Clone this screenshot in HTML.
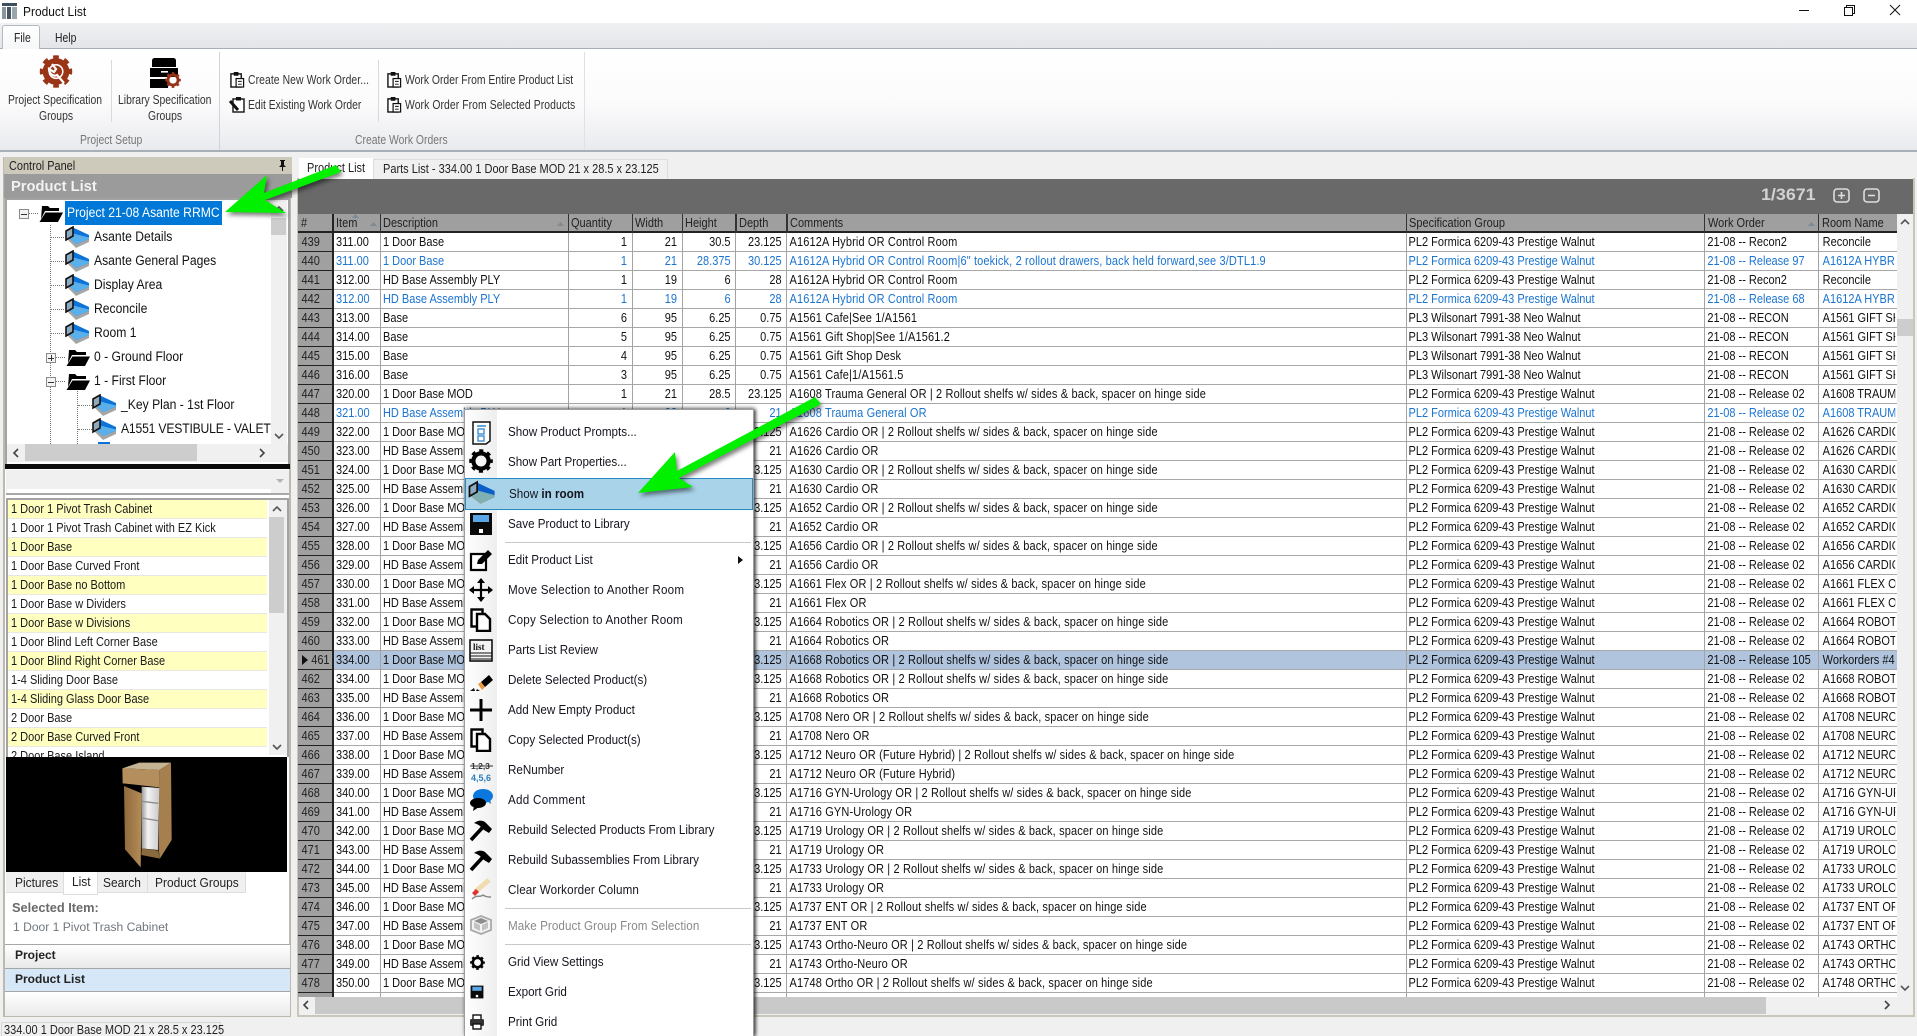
<!DOCTYPE html>
<html><head><meta charset="utf-8"><title>Product List</title>
<style>
html,body{margin:0;padding:0;overflow:hidden;width:1917px;height:1036px}
body{position:relative;background:#f0f0f0;font-family:"Liberation Sans",sans-serif;color:#111}
#w{position:absolute;left:0;top:0;width:1917px;height:1036px;overflow:hidden}
.a{position:absolute}
.t{position:absolute;white-space:nowrap;line-height:16px;transform-origin:0 50%}
.rb{font-size:12.5px;transform:scaleX(.83);color:#333}
.rg{font-size:12.5px;transform:scaleX(.83);color:#777}
.tr{font-size:13.5px;transform:scaleX(.9);color:#111}
.li{font-size:12.5px;transform:scaleX(.88);color:#1a1a1a}
.mn{font-size:12.8px;transform:scaleX(.91);color:#151520}
.tb{font-size:13px;transform:scaleX(.92);color:#222}
svg.a{overflow:visible}
.dv{position:absolute;width:0;border-left:1px dotted #777}
.dh{position:absolute;height:0;border-top:1px dotted #777}
.ex{position:absolute;width:8px;height:8px;border:1px solid #8a8a8a;background:#f4f4f4}
.ex:before{content:"";position:absolute;left:1px;right:1px;top:3.5px;height:1px;background:#333}
.ex.p:after{content:"";position:absolute;top:1px;bottom:1px;left:3.5px;width:1px;background:#333}
.vl{position:absolute;width:1px;top:233px;height:764px;background:#a3a3a3}
.vh{position:absolute;width:1.5px;top:214px;height:19px;background:#333}
table{position:absolute;left:298px;top:233px;width:1815.4px;table-layout:fixed;border-collapse:collapse;transform:scaleX(.88);transform-origin:0 0;font-size:12.5px;color:#111}
td{height:19px;padding:0 0 0 4px;line-height:18px;white-space:nowrap;overflow:hidden;vertical-align:top}
td.r{text-align:right;padding:0 5px 0 0}
td:nth-child(8){letter-spacing:.16px}
tr.b td{color:#1b74d0}
td:first-child{color:#222 !important}
.ms{position:absolute;left:469px;width:24px;height:24px}
</style></head>
<body><div id="w">
<svg width="0" height="0" style="position:absolute">
<defs>
<symbol id="gear" viewBox="0 0 24 24"><circle cx="12" cy="12" r="7.6" fill="none" stroke="currentColor" stroke-width="4.2"/><circle cx="12" cy="12" r="10" fill="none" stroke="currentColor" stroke-width="3.6" stroke-dasharray="3.9 3.95" stroke-dashoffset="2"/></symbol>
<symbol id="room" viewBox="0 0 24 22"><polygon points="0,11 11,22 24,16 24,9 11,15" fill="#a6a6a6"/><polygon points="7,1 24,9 24,13 11,18 4,12" fill="#0b74d6"/><polygon points="6,7 24,11.5 24,13 11,18 4,12" fill="#5ab0ea"/><polygon points="1,5 8,1 8,10 1,14" fill="#8fa9bd" stroke="#111" stroke-width="1.6"/></symbol>
<symbol id="folder" viewBox="0 0 24 17"><path d="M3 1h6l2 2h9v3H6L2 14z" fill="#000"/><path d="M6.5 7.5H24L19 17H0.5z" fill="#000"/></symbol>
<symbol id="clip" viewBox="0 0 16 18"><rect x="1" y="3" width="11" height="14" fill="#fff" stroke="#111" stroke-width="1.5"/><rect x="4" y="1" width="5" height="4" fill="#111"/><rect x="6.5" y="8" width="8" height="9" fill="#fff" stroke="#111" stroke-width="1.3"/><path d="M8.5 11h4M8.5 14h4" stroke="#111"/></symbol>
<symbol id="doc2" viewBox="0 0 22 24"><rect x="1.5" y="1.5" width="11" height="17" fill="#fff" stroke="#000" stroke-width="2.4"/><path d="M7 6h8l5 5v12H7z" fill="#fff" stroke="#000" stroke-width="2.4"/></symbol>
<symbol id="floppy" viewBox="0 0 24 24"><path d="M1 1h22v22H1z" fill="#0a0a0a"/><rect x="4" y="3" width="16" height="7" fill="#5aa6e6"/><rect x="10" y="17" width="4" height="4" fill="#fff"/></symbol>
<symbol id="hammer" viewBox="0 0 24 24"><path d="M2 22L14 9" stroke="#000" stroke-width="3.6" fill="none"/><path d="M5 5c4-3 8-3 11-1l7 7-3 4-5-3-3-3C10 7 8 6 5 5z" fill="#000"/></symbol>
<linearGradient id="dg" x1="0" x2="1" y1="0" y2="0"><stop offset="0" stop-color="#8f6a3c"/><stop offset="1" stop-color="#b48c58"/></linearGradient>
<linearGradient id="ig" x1="0" x2="1" y1="0" y2="0"><stop offset="0" stop-color="#9c9c9c"/><stop offset=".35" stop-color="#f4f4f4"/><stop offset="1" stop-color="#c9c9c9"/></linearGradient>
</defs>
</svg>

<!-- title bar -->
<div class="a" style="left:0;top:0;width:1917px;height:23px;background:#fff"></div>
<svg class="a" style="left:2px;top:3px" width="15" height="16" viewBox="0 0 15 16"><rect width="15" height="3" fill="#3d4f5c"/><rect y="4" width="4" height="12" fill="#8a97a0"/><rect x="5" y="4" width="4" height="12" fill="#46555f"/><rect x="10" y="4" width="5" height="12" fill="#9aa6ae"/></svg>
<div class="t" style="left:23px;top:4px;font-size:13px;transform:scaleX(.92);color:#111">Product List</div>
<div class="a" style="left:1799px;top:10px;width:10px;height:1px;background:#111"></div>
<div class="a" style="left:1844px;top:7px;width:7px;height:7px;border:1px solid #111;background:#fff;z-index:2"></div>
<div class="a" style="left:1846px;top:5px;width:7px;height:7px;border:1px solid #111"></div>
<svg class="a" style="left:1890px;top:5px" width="10" height="10"><path d="M0 0L10 10M10 0L0 10" stroke="#111"/></svg>

<!-- tab strip -->
<div class="a" style="left:0;top:23px;width:1917px;height:25px;background:linear-gradient(#f0f1f3,#e3e5e9)"></div>
<div class="a" style="left:0;top:48px;width:1917px;height:1px;background:#a7aeb6"></div>
<div class="a" style="left:2px;top:25px;width:38px;height:24px;background:linear-gradient(#fff,#f6f7f8);border:1px solid #b4bac0;border-bottom:none;border-radius:3px 3px 0 0;box-sizing:border-box"></div>
<div class="t rb" style="left:14px;top:30px;color:#222">File</div>
<div class="t rb" style="left:55px;top:30px;color:#222">Help</div>

<!-- ribbon -->
<div class="a" style="left:0;top:49px;width:1917px;height:101px;background:linear-gradient(#fff 0,#fbfbfc 55%,#e9eaee 100%)"></div>
<div class="a" style="left:0;top:150px;width:1917px;height:2px;background:#a9afb7"></div>
<div class="a" style="left:111px;top:60px;width:1px;height:62px;background:#dadada"></div>
<div class="a" style="left:219px;top:52px;width:1px;height:98px;background:#d0d3d8"></div>
<div class="a" style="left:378px;top:60px;width:1px;height:62px;background:#dadada"></div>
<div class="a" style="left:584px;top:52px;width:1px;height:98px;background:#dfe1e5"></div>
<svg class="a" style="left:39px;top:55px;color:#9a3417" width="34" height="33"><use href="#gear" width="34" height="33"/><circle cx="17" cy="16.5" r="6" fill="#9a3417"/><path d="M13 9l4 5-2 3-5-3c0 5 5 8 8 6l7 8" stroke="#fff" stroke-width="2.2" fill="none"/></svg>
<svg class="a" style="left:150px;top:57px" width="31" height="31" viewBox="0 0 31 31"><path d="M2 10V4c0-2 1-3 3-3h18c2 0 3 1 3 3v6z" fill="#000"/><rect x="0" y="11" width="28" height="9" fill="#000"/><rect x="0" y="22" width="18" height="9" fill="#000"/><rect x="11" y="14" width="7" height="1.6" fill="#fff"/><g style="color:#963318"><use href="#gear" x="15" y="15" width="16" height="16"/></g></svg>
<div class="t rb" style="left:8px;top:92px">Project Specification</div>
<div class="t rb" style="left:39px;top:108px">Groups</div>
<div class="t rb" style="left:118px;top:92px">Library Specification</div>
<div class="t rb" style="left:148px;top:108px">Groups</div>
<div class="t rg" style="left:80px;top:132px">Project Setup</div>
<div class="t rg" style="left:355px;top:132px">Create Work Orders</div>
<svg class="a" style="left:230px;top:71px" width="15" height="17"><use href="#clip" width="15" height="17"/></svg>
<svg class="a" style="left:230px;top:96px" width="15" height="17" viewBox="0 0 15 17"><rect x="3" y="3" width="11" height="13" fill="#fff" stroke="#111" stroke-width="1.4"/><rect x="6" y="1" width="5" height="3.5" fill="#111"/><path d="M0 5l8 9" stroke="#111" stroke-width="3"/></svg>
<svg class="a" style="left:387px;top:71px" width="15" height="17"><use href="#clip" width="15" height="17"/></svg>
<svg class="a" style="left:387px;top:96px" width="15" height="17"><use href="#clip" width="15" height="17"/></svg>
<div class="t rb" style="left:248px;top:72px;letter-spacing:.1px">Create New Work Order...</div>
<div class="t rb" style="left:248px;top:97px">Edit Existing Work Order</div>
<div class="t rb" style="left:405px;top:72px">Work Order From Entire Product List</div>
<div class="t rb" style="left:405px;top:97px;letter-spacing:.1px">Work Order From Selected Products</div>

<!-- left panel -->
<div class="a" style="left:3px;top:157px;width:288px;height:860px;border:1px solid #bdbaad;border-width:0 2px 2px 2px;box-sizing:border-box;background:#fff"></div>
<div class="a" style="left:4px;top:157px;width:288px;height:17px;background:#cdc9bb"></div>
<div class="t" style="left:9px;top:158px;font-size:13px;transform:scaleX(.84);color:#222">Control Panel</div>
<svg class="a" style="left:278px;top:160px" width="9" height="11"><path d="M2 0h5v1H6v4l2 2H1l2-2V1H2zM4 7h1v4H4z" fill="#111"/></svg>
<div class="a" style="left:4px;top:174px;width:288px;height:24px;background:#9b9b9b"></div>
<div class="t" style="left:11px;top:179px;font-size:15px;font-weight:bold;transform:scaleX(.98);color:#f2f2f2">Product List</div>
<div class="a" style="left:5px;top:198px;width:285px;height:266px;background:#fff;border:2px solid #a3a3a3;box-sizing:border-box;border-bottom:none"></div>
<div class="a" style="left:7px;top:444px;width:281px;height:18px;background:#f0f0f0"></div>
<div class="a" style="left:271px;top:200px;width:16px;height:244px;background:#f0f0f0"></div>
<div class="a" style="left:271px;top:218px;width:15px;height:17px;background:#cdcdcd"></div>

<div class="dv" style="left:50px;top:225px;height:219px"></div>
<div class="dv" style="left:77px;top:391px;height:53px"></div>
<div class="dh" style="left:28px;top:213px;width:10px"></div>
<div class="dh" style="left:51px;top:237px;width:13px"></div>
<div class="dh" style="left:51px;top:261px;width:13px"></div>
<div class="dh" style="left:51px;top:285px;width:13px"></div>
<div class="dh" style="left:51px;top:309px;width:13px"></div>
<div class="dh" style="left:51px;top:333px;width:13px"></div>
<div class="dh" style="left:55px;top:357px;width:10px"></div>
<div class="dh" style="left:55px;top:381px;width:10px"></div>
<div class="dh" style="left:78px;top:405px;width:14px"></div>
<div class="dh" style="left:78px;top:429px;width:14px"></div>
<div class="ex" style="left:19px;top:209px"></div>
<div class="ex p" style="left:46px;top:353px"></div>
<div class="ex" style="left:46px;top:377px"></div>

<svg class="a" style="left:39px;top:205px" width="24" height="17"><use href="#folder" width="24" height="17"/></svg>
<div class="a" style="left:65px;top:201px;width:157px;height:24px;background:#0078d7"></div>
<div class="t tr" style="left:67px;top:205px;color:#fff">Project 21-08 Asante RRMC</div>
<svg class="a" style="left:65px;top:226px" width="24" height="22"><use href="#room" width="24" height="22"/></svg>
<div class="t tr" style="left:94px;top:229px">Asante Details</div>
<svg class="a" style="left:65px;top:250px" width="24" height="22"><use href="#room" width="24" height="22"/></svg>
<div class="t tr" style="left:94px;top:253px">Asante General Pages</div>
<svg class="a" style="left:65px;top:274px" width="24" height="22"><use href="#room" width="24" height="22"/></svg>
<div class="t tr" style="left:94px;top:277px">Display Area</div>
<svg class="a" style="left:65px;top:298px" width="24" height="22"><use href="#room" width="24" height="22"/></svg>
<div class="t tr" style="left:94px;top:301px">Reconcile</div>
<svg class="a" style="left:65px;top:322px" width="24" height="22"><use href="#room" width="24" height="22"/></svg>
<div class="t tr" style="left:94px;top:325px">Room 1</div>
<svg class="a" style="left:66px;top:349px" width="24" height="17"><use href="#folder" width="24" height="17"/></svg>
<div class="t tr" style="left:94px;top:349px">0 - Ground Floor</div>
<svg class="a" style="left:66px;top:373px" width="24" height="17"><use href="#folder" width="24" height="17"/></svg>
<div class="t tr" style="left:94px;top:373px">1 - First Floor</div>
<svg class="a" style="left:92px;top:394px" width="24" height="22"><use href="#room" width="24" height="22"/></svg>
<div class="t tr" style="left:121px;top:397px">_Key Plan - 1st Floor</div>
<svg class="a" style="left:92px;top:418px" width="24" height="22"><use href="#room" width="24" height="22"/></svg>
<div class="t tr" style="left:121px;top:421px;letter-spacing:-.2px">A1551 VESTIBULE - VALET</div>
<svg class="a" style="left:92px;top:442px" width="24" height="2" viewBox="0 0 24 2"><rect x="6" width="12" height="2" fill="#0b74d6"/></svg>

<svg class="a" style="left:274px;top:206px" width="10" height="6"><path d="M1 5l4-4 4 4" fill="none" stroke="#555" stroke-width="1.6"/></svg>
<svg class="a" style="left:274px;top:433px" width="10" height="6"><path d="M1 1l4 4 4-4" fill="none" stroke="#555" stroke-width="1.6"/></svg>
<div class="a" style="left:25px;top:444px;width:172px;height:17px;background:#cdcdcd"></div>
<svg class="a" style="left:13px;top:448px" width="6" height="10"><path d="M5 1L1 5l4 4" fill="none" stroke="#444" stroke-width="1.6"/></svg>
<svg class="a" style="left:259px;top:448px" width="6" height="10"><path d="M1 1l4 4-4 4" fill="none" stroke="#444" stroke-width="1.6"/></svg>
<div class="a" style="left:5px;top:464px;width:285px;height:5px;background:#0c0c0c"></div>
<div class="a" style="left:6px;top:470px;width:283px;height:23px;background:#f0f0f0;border-bottom:2px solid #a8a8a8"></div>
<div class="a" style="left:7px;top:489px;width:264px;height:4px;background:#fff"></div>
<svg class="a" style="left:276px;top:479px" width="8" height="4"><path d="M0 0h8L4 4z" fill="#b4b4b4"/></svg>

<!-- item list -->
<div class="a" style="left:6px;top:498px;width:283px;height:259px;background:#fff;border:2px solid #a3a3a3;box-sizing:border-box;border-bottom:none"></div>
<div class="a" style="left:8px;top:500px;width:259px;height:255px;background:repeating-linear-gradient(#ffffc0 0,#ffffc0 18px,#e9e9e0 18px,#e9e9e0 19px,#fff 19px,#fff 37px,#e6e6e6 37px,#e6e6e6 38px)"></div>
<div class="t li" style="left:11px;top:501px">1 Door 1 Pivot Trash Cabinet</div>
<div class="t li" style="left:11px;top:520px">1 Door 1 Pivot Trash Cabinet with EZ Kick</div>
<div class="t li" style="left:11px;top:539px">1 Door Base</div>
<div class="t li" style="left:11px;top:558px">1 Door Base Curved Front</div>
<div class="t li" style="left:11px;top:577px">1 Door Base no Bottom</div>
<div class="t li" style="left:11px;top:596px">1 Door Base w Dividers</div>
<div class="t li" style="left:11px;top:615px">1 Door Base w Divisions</div>
<div class="t li" style="left:11px;top:634px">1 Door Blind Left Corner Base</div>
<div class="t li" style="left:11px;top:653px">1 Door Blind Right Corner Base</div>
<div class="t li" style="left:11px;top:672px">1-4 Sliding Door Base</div>
<div class="t li" style="left:11px;top:691px">1-4 Sliding Glass Door Base</div>
<div class="t li" style="left:11px;top:710px">2 Door Base</div>
<div class="t li" style="left:11px;top:729px">2 Door Base Curved Front</div>
<div class="t li" style="left:11px;top:748px">2 Door Base Island</div>
<div class="a" style="left:269px;top:500px;width:18px;height:255px;background:#f0f0f0"></div>
<div class="a" style="left:269px;top:517px;width:15px;height:96px;background:#cdcdcd"></div>
<svg class="a" style="left:272px;top:506px" width="10" height="6"><path d="M1 5l4-4 4 4" fill="none" stroke="#555" stroke-width="1.6"/></svg>
<svg class="a" style="left:272px;top:744px" width="10" height="6"><path d="M1 1l4 4 4-4" fill="none" stroke="#555" stroke-width="1.6"/></svg>

<!-- image -->
<div class="a" style="left:6px;top:757px;width:281px;height:115px;background:#000"></div>
<svg class="a" style="left:0;top:760px" width="180" height="115" viewBox="0 0 540 345">
<polygon points="367,25 418,8 513,8 478,30" fill="#c4b493"/>
<polygon points="478,30 513,8 515,240 480,295 476,270" fill="#a67f4f"/>
<polygon points="367,25 478,30 478,82 368,70" fill="#b48e5c"/>
<polygon points="425,80 478,84 474,270 425,265" fill="url(#ig)"/>
<path d="M425 124l50 6M425 174l49 8" stroke="#8e8e8e" stroke-width="4"/>
<polygon points="425,265 475,272 480,296 424,285" fill="#8a6a3f"/>
<polygon points="372,78 425,100 422,322 375,268" fill="url(#dg)"/>
</svg>
<!-- bottom tabs -->
<div class="a" style="left:6px;top:872px;width:240px;height:20px;background:#f0f0f0;border-bottom:1px solid #ddd"></div>
<div class="a" style="left:63px;top:872px;width:35px;height:23px;background:#fff;border:1px solid #ddd;border-top:none;box-sizing:border-box"></div>
<div class="a" style="left:147px;top:873px;width:1px;height:19px;background:#ddd"></div>
<div class="a" style="left:245px;top:873px;width:1px;height:19px;background:#ddd"></div>
<div class="t tb" style="left:15px;top:875px">Pictures</div>
<div class="t tb" style="left:72px;top:874px">List</div>
<div class="t tb" style="left:103px;top:875px">Search</div>
<div class="t tb" style="left:155px;top:875px">Product Groups</div>
<div class="t" style="left:12px;top:900px;font-size:12.8px;font-weight:bold;color:#6a6a6a">Selected Item:</div>
<div class="t" style="left:13px;top:919px;font-size:12.1px;color:#70767c">1 Door 1 Pivot Trash Cabinet</div>
<div class="a" style="left:5px;top:944px;width:285px;height:24px;background:linear-gradient(#fff,#e9e9e9);border-top:1px solid #a6a6a6;box-sizing:border-box"></div>
<div class="a" style="left:5px;top:968px;width:285px;height:24px;background:#d6e8f7;border-top:1px solid #a6a6a6;border-bottom:1px solid #a6a6a6;box-sizing:border-box"></div>
<div class="a" style="left:5px;top:992px;width:285px;height:24px;background:linear-gradient(#fff,#eaeaea)"></div>
<div class="t" style="left:15px;top:947px;font-size:12px;font-weight:bold;color:#222">Project</div>
<div class="t" style="left:15px;top:971px;font-size:12px;font-weight:bold;color:#222">Product List</div>

<!-- status -->
<div class="a" style="left:1px;top:1022px;width:220px;height:14px;border:1px solid #d5d5d5;border-bottom:none;box-sizing:border-box"></div>
<div class="t li" style="left:4px;top:1022px;transform:scaleX(.88);color:#222">334.00 1 Door Base MOD 21 x 28.5 x 23.125</div>

<!-- right panel -->
<div class="a" style="left:297px;top:178px;width:1618px;height:839px;border:2px solid #c9c6b8;border-top:none;box-sizing:border-box;background:#f0f0f0"></div>
<div class="a" style="left:299px;top:158px;width:74px;height:21px;background:#fff"></div>
<div class="a" style="left:373px;top:159px;width:295px;height:20px;background:#f0f0f0;border:1px solid #ddd;border-bottom:none;box-sizing:border-box"></div>
<div class="t li" style="left:307px;top:160px;color:#222">Product List</div>
<div class="t li" style="left:383px;top:161px;color:#222">Parts List - 334.00 1 Door Base MOD 21 x 28.5 x 23.125</div>
<div class="a" style="left:298px;top:179px;width:1615px;height:35px;background:#696969"></div>
<div class="t" style="left:1761px;top:187px;font-size:17px;font-weight:bold;transform:scaleX(1.05);color:#d2d2d2">1/3671</div>
<svg class="a" style="left:1833px;top:188px" width="17" height="15"><rect x="1" y="1" width="15" height="13" rx="3" fill="none" stroke="#ddd" stroke-width="1.6"/><path d="M8.5 4v7M5 7.5h7" stroke="#ddd" stroke-width="1.6"/></svg>
<svg class="a" style="left:1863px;top:188px" width="17" height="15"><rect x="1" y="1" width="15" height="13" rx="3" fill="none" stroke="#ddd" stroke-width="1.6"/><path d="M5 7.5h7" stroke="#ddd" stroke-width="1.6"/></svg>

<!-- grid -->
<div class="a" style="left:298px;top:214px;width:1599px;height:19px;background:#9f9f9f;border-bottom:2px solid #222;box-sizing:border-box"></div>
<div class="a" style="left:298px;top:233px;width:1599px;height:764px;background:#fff"></div>
<div class="a" style="left:298px;top:233px;width:34px;height:764px;background:#a0a0a0"></div>
<div class="a" style="left:332px;top:651px;width:1565px;height:18px;background:#b0c4de"></div>
<div class="a" style="left:332px;top:233px;width:1565px;height:764px;background:repeating-linear-gradient(transparent 0,transparent 18px,#a8a8a8 18px,#a8a8a8 19px)"></div>
<div class="a" style="left:298px;top:233px;width:34px;height:764px;background:repeating-linear-gradient(transparent 0,transparent 18px,#222 18px,#222 19px)"></div>
<div class="a" style="left:332px;top:214px;width:1.5px;height:783px;background:#222"></div>
<div class="vl" style="left:380px"></div><div class="vl" style="left:568px"></div><div class="vl" style="left:632px"></div><div class="vl" style="left:682px"></div><div class="vl" style="left:735px"></div><div class="vl" style="left:786px"></div><div class="vl" style="left:1406px"></div><div class="vl" style="left:1704px"></div><div class="vl" style="left:1818px"></div>
<div class="vh" style="left:379.5px"></div><div class="vh" style="left:567.5px"></div><div class="vh" style="left:631.5px"></div><div class="vh" style="left:681.5px"></div><div class="vh" style="left:735px"></div><div class="vh" style="left:786px"></div><div class="vh" style="left:1405.5px"></div><div class="vh" style="left:1703.5px"></div><div class="vh" style="left:1817.5px"></div>

<div class="t li" style="left:301px;top:215px;color:#222">#</div>
<div class="t li" style="left:336px;top:215px;color:#222">Item</div>
<div class="t li" style="left:383px;top:215px;color:#222">Description</div>
<div class="t li" style="left:571px;top:215px;color:#222">Quantity</div>
<div class="t li" style="left:635px;top:215px;color:#222">Width</div>
<div class="t li" style="left:685px;top:215px;color:#222">Height</div>
<div class="t li" style="left:739px;top:215px;color:#222">Depth</div>
<div class="t li" style="left:790px;top:215px;color:#222">Comments</div>
<div class="t li" style="left:1409px;top:215px;color:#222">Specification Group</div>
<div class="t li" style="left:1708px;top:215px;color:#222">Work Order</div>
<div class="t li" style="left:1822px;top:215px;color:#222">Room Name</div>
<svg class="a" style="left:352px;top:214px" width="8" height="5"><path d="M0 4h7L3.5 0z" fill="#7d8a94"/></svg>
<svg class="a" style="left:370px;top:222px" width="8" height="5"><path d="M0 4h7L3.5 0z" fill="#7d8a94"/></svg>
<svg class="a" style="left:557px;top:222px" width="8" height="5"><path d="M0 4h7L3.5 0z" fill="#7d8a94"/></svg>
<svg class="a" style="left:1808px;top:222px" width="8" height="5"><path d="M0 4h7L3.5 0z" fill="#7d8a94"/></svg>

<table><colgroup><col style="width:39.2px"><col style="width:53.4px"><col style="width:213.6px"><col style="width:72.7px"><col style="width:56.8px"><col style="width:60.9px"><col style="width:58px"><col style="width:703.4px"><col style="width:339.6px"><col style="width:131px"><col style="width:86.8px"></colgroup>
<tr><td>439</td><td>311.00</td><td>1 Door Base</td><td class="r">1</td><td class="r">21</td><td class="r">30.5</td><td class="r">23.125</td><td>A1612A Hybrid OR Control Room</td><td>PL2 Formica 6209-43 Prestige Walnut</td><td>21-08 -- Recon2</td><td>Reconcile</td></tr>
<tr class="b"><td>440</td><td>311.00</td><td>1 Door Base</td><td class="r">1</td><td class="r">21</td><td class="r">28.375</td><td class="r">30.125</td><td>A1612A Hybrid OR Control Room|6" toekick, 2 rollout drawers, back held forward,see 3/DTL1.9</td><td>PL2 Formica 6209-43 Prestige Walnut</td><td>21-08 -- Release 97</td><td>A1612A HYBRID</td></tr>
<tr><td>441</td><td>312.00</td><td>HD Base Assembly PLY</td><td class="r">1</td><td class="r">19</td><td class="r">6</td><td class="r">28</td><td>A1612A Hybrid OR Control Room</td><td>PL2 Formica 6209-43 Prestige Walnut</td><td>21-08 -- Recon2</td><td>Reconcile</td></tr>
<tr class="b"><td>442</td><td>312.00</td><td>HD Base Assembly PLY</td><td class="r">1</td><td class="r">19</td><td class="r">6</td><td class="r">28</td><td>A1612A Hybrid OR Control Room</td><td>PL2 Formica 6209-43 Prestige Walnut</td><td>21-08 -- Release 68</td><td>A1612A HYBRID</td></tr>
<tr><td>443</td><td>313.00</td><td>Base</td><td class="r">6</td><td class="r">95</td><td class="r">6.25</td><td class="r">0.75</td><td>A1561 Cafe|See 1/A1561</td><td>PL3 Wilsonart 7991-38 Neo Walnut</td><td>21-08 -- RECON</td><td>A1561 GIFT SHOP</td></tr>
<tr><td>444</td><td>314.00</td><td>Base</td><td class="r">5</td><td class="r">95</td><td class="r">6.25</td><td class="r">0.75</td><td>A1561 Gift Shop|See 1/A1561.2</td><td>PL3 Wilsonart 7991-38 Neo Walnut</td><td>21-08 -- RECON</td><td>A1561 GIFT SHOP</td></tr>
<tr><td>445</td><td>315.00</td><td>Base</td><td class="r">4</td><td class="r">95</td><td class="r">6.25</td><td class="r">0.75</td><td>A1561 Gift Shop Desk</td><td>PL3 Wilsonart 7991-38 Neo Walnut</td><td>21-08 -- RECON</td><td>A1561 GIFT SHOP</td></tr>
<tr><td>446</td><td>316.00</td><td>Base</td><td class="r">3</td><td class="r">95</td><td class="r">6.25</td><td class="r">0.75</td><td>A1561 Cafe|1/A1561.5</td><td>PL3 Wilsonart 7991-38 Neo Walnut</td><td>21-08 -- RECON</td><td>A1561 GIFT SHOP</td></tr>
<tr><td>447</td><td>320.00</td><td>1 Door Base MOD</td><td class="r">1</td><td class="r">21</td><td class="r">28.5</td><td class="r">23.125</td><td>A1608 Trauma General OR | 2 Rollout shelfs w/ sides &amp; back, spacer on hinge side</td><td>PL2 Formica 6209-43 Prestige Walnut</td><td>21-08 -- Release 02</td><td>A1608 TRAUMA</td></tr>
<tr class="b"><td>448</td><td>321.00</td><td>HD Base Assembly PLY</td><td class="r">1</td><td class="r">22</td><td class="r">6</td><td class="r">21</td><td>A1608 Trauma General OR</td><td>PL2 Formica 6209-43 Prestige Walnut</td><td>21-08 -- Release 02</td><td>A1608 TRAUMA</td></tr>
<tr><td>449</td><td>322.00</td><td>1 Door Base MOD</td><td class="r">1</td><td class="r">21</td><td class="r">28.5</td><td class="r">23.125</td><td>A1626 Cardio OR | 2 Rollout shelfs w/ sides &amp; back, spacer on hinge side</td><td>PL2 Formica 6209-43 Prestige Walnut</td><td>21-08 -- Release 02</td><td>A1626 CARDIO</td></tr>
<tr><td>450</td><td>323.00</td><td>HD Base Assembly PLY</td><td class="r">1</td><td class="r">22</td><td class="r">6</td><td class="r">21</td><td>A1626 Cardio OR</td><td>PL2 Formica 6209-43 Prestige Walnut</td><td>21-08 -- Release 02</td><td>A1626 CARDIO</td></tr>
<tr><td>451</td><td>324.00</td><td>1 Door Base MOD</td><td class="r">1</td><td class="r">21</td><td class="r">28.5</td><td class="r">23.125</td><td>A1630 Cardio OR | 2 Rollout shelfs w/ sides &amp; back, spacer on hinge side</td><td>PL2 Formica 6209-43 Prestige Walnut</td><td>21-08 -- Release 02</td><td>A1630 CARDIO</td></tr>
<tr><td>452</td><td>325.00</td><td>HD Base Assembly PLY</td><td class="r">1</td><td class="r">22</td><td class="r">6</td><td class="r">21</td><td>A1630 Cardio OR</td><td>PL2 Formica 6209-43 Prestige Walnut</td><td>21-08 -- Release 02</td><td>A1630 CARDIO</td></tr>
<tr><td>453</td><td>326.00</td><td>1 Door Base MOD</td><td class="r">1</td><td class="r">21</td><td class="r">28.5</td><td class="r">23.125</td><td>A1652 Cardio OR | 2 Rollout shelfs w/ sides &amp; back, spacer on hinge side</td><td>PL2 Formica 6209-43 Prestige Walnut</td><td>21-08 -- Release 02</td><td>A1652 CARDIO</td></tr>
<tr><td>454</td><td>327.00</td><td>HD Base Assembly PLY</td><td class="r">1</td><td class="r">22</td><td class="r">6</td><td class="r">21</td><td>A1652 Cardio OR</td><td>PL2 Formica 6209-43 Prestige Walnut</td><td>21-08 -- Release 02</td><td>A1652 CARDIO</td></tr>
<tr><td>455</td><td>328.00</td><td>1 Door Base MOD</td><td class="r">1</td><td class="r">21</td><td class="r">28.5</td><td class="r">23.125</td><td>A1656 Cardio OR | 2 Rollout shelfs w/ sides &amp; back, spacer on hinge side</td><td>PL2 Formica 6209-43 Prestige Walnut</td><td>21-08 -- Release 02</td><td>A1656 CARDIO</td></tr>
<tr><td>456</td><td>329.00</td><td>HD Base Assembly PLY</td><td class="r">1</td><td class="r">22</td><td class="r">6</td><td class="r">21</td><td>A1656 Cardio OR</td><td>PL2 Formica 6209-43 Prestige Walnut</td><td>21-08 -- Release 02</td><td>A1656 CARDIO</td></tr>
<tr><td>457</td><td>330.00</td><td>1 Door Base MOD</td><td class="r">1</td><td class="r">21</td><td class="r">28.5</td><td class="r">23.125</td><td>A1661 Flex OR | 2 Rollout shelfs w/ sides &amp; back, spacer on hinge side</td><td>PL2 Formica 6209-43 Prestige Walnut</td><td>21-08 -- Release 02</td><td>A1661 FLEX OR</td></tr>
<tr><td>458</td><td>331.00</td><td>HD Base Assembly PLY</td><td class="r">1</td><td class="r">22</td><td class="r">6</td><td class="r">21</td><td>A1661 Flex OR</td><td>PL2 Formica 6209-43 Prestige Walnut</td><td>21-08 -- Release 02</td><td>A1661 FLEX OR</td></tr>
<tr><td>459</td><td>332.00</td><td>1 Door Base MOD</td><td class="r">1</td><td class="r">21</td><td class="r">28.5</td><td class="r">23.125</td><td>A1664 Robotics OR | 2 Rollout shelfs w/ sides &amp; back, spacer on hinge side</td><td>PL2 Formica 6209-43 Prestige Walnut</td><td>21-08 -- Release 02</td><td>A1664 ROBOTICS</td></tr>
<tr><td>460</td><td>333.00</td><td>HD Base Assembly PLY</td><td class="r">1</td><td class="r">22</td><td class="r">6</td><td class="r">21</td><td>A1664 Robotics OR</td><td>PL2 Formica 6209-43 Prestige Walnut</td><td>21-08 -- Release 02</td><td>A1664 ROBOTICS</td></tr>
<tr><td style="padding-left:15px">461</td><td>334.00</td><td>1 Door Base MOD</td><td class="r">1</td><td class="r">21</td><td class="r">28.5</td><td class="r">23.125</td><td>A1668 Robotics OR | 2 Rollout shelfs w/ sides &amp; back, spacer on hinge side</td><td>PL2 Formica 6209-43 Prestige Walnut</td><td>21-08 -- Release 105</td><td>Workorders #4</td></tr>
<tr><td>462</td><td>334.00</td><td>1 Door Base MOD</td><td class="r">1</td><td class="r">21</td><td class="r">28.5</td><td class="r">23.125</td><td>A1668 Robotics OR | 2 Rollout shelfs w/ sides &amp; back, spacer on hinge side</td><td>PL2 Formica 6209-43 Prestige Walnut</td><td>21-08 -- Release 02</td><td>A1668 ROBOTICS</td></tr>
<tr><td>463</td><td>335.00</td><td>HD Base Assembly PLY</td><td class="r">1</td><td class="r">22</td><td class="r">6</td><td class="r">21</td><td>A1668 Robotics OR</td><td>PL2 Formica 6209-43 Prestige Walnut</td><td>21-08 -- Release 02</td><td>A1668 ROBOTICS</td></tr>
<tr><td>464</td><td>336.00</td><td>1 Door Base MOD</td><td class="r">1</td><td class="r">21</td><td class="r">28.5</td><td class="r">23.125</td><td>A1708 Nero OR | 2 Rollout shelfs w/ sides &amp; back, spacer on hinge side</td><td>PL2 Formica 6209-43 Prestige Walnut</td><td>21-08 -- Release 02</td><td>A1708 NEURO</td></tr>
<tr><td>465</td><td>337.00</td><td>HD Base Assembly PLY</td><td class="r">1</td><td class="r">22</td><td class="r">6</td><td class="r">21</td><td>A1708 Nero OR</td><td>PL2 Formica 6209-43 Prestige Walnut</td><td>21-08 -- Release 02</td><td>A1708 NEURO</td></tr>
<tr><td>466</td><td>338.00</td><td>1 Door Base MOD</td><td class="r">1</td><td class="r">21</td><td class="r">28.5</td><td class="r">23.125</td><td>A1712 Neuro OR (Future Hybrid) | 2 Rollout shelfs w/ sides &amp; back, spacer on hinge side</td><td>PL2 Formica 6209-43 Prestige Walnut</td><td>21-08 -- Release 02</td><td>A1712 NEURO</td></tr>
<tr><td>467</td><td>339.00</td><td>HD Base Assembly PLY</td><td class="r">1</td><td class="r">22</td><td class="r">6</td><td class="r">21</td><td>A1712 Neuro OR (Future Hybrid)</td><td>PL2 Formica 6209-43 Prestige Walnut</td><td>21-08 -- Release 02</td><td>A1712 NEURO</td></tr>
<tr><td>468</td><td>340.00</td><td>1 Door Base MOD</td><td class="r">1</td><td class="r">21</td><td class="r">28.5</td><td class="r">23.125</td><td>A1716 GYN-Urology OR | 2 Rollout shelfs w/ sides &amp; back, spacer on hinge side</td><td>PL2 Formica 6209-43 Prestige Walnut</td><td>21-08 -- Release 02</td><td>A1716 GYN-UROLOGY</td></tr>
<tr><td>469</td><td>341.00</td><td>HD Base Assembly PLY</td><td class="r">1</td><td class="r">22</td><td class="r">6</td><td class="r">21</td><td>A1716 GYN-Urology OR</td><td>PL2 Formica 6209-43 Prestige Walnut</td><td>21-08 -- Release 02</td><td>A1716 GYN-UROLOGY</td></tr>
<tr><td>470</td><td>342.00</td><td>1 Door Base MOD</td><td class="r">1</td><td class="r">21</td><td class="r">28.5</td><td class="r">23.125</td><td>A1719 Urology OR | 2 Rollout shelfs w/ sides &amp; back, spacer on hinge side</td><td>PL2 Formica 6209-43 Prestige Walnut</td><td>21-08 -- Release 02</td><td>A1719 UROLOGY</td></tr>
<tr><td>471</td><td>343.00</td><td>HD Base Assembly PLY</td><td class="r">1</td><td class="r">22</td><td class="r">6</td><td class="r">21</td><td>A1719 Urology OR</td><td>PL2 Formica 6209-43 Prestige Walnut</td><td>21-08 -- Release 02</td><td>A1719 UROLOGY</td></tr>
<tr><td>472</td><td>344.00</td><td>1 Door Base MOD</td><td class="r">1</td><td class="r">21</td><td class="r">28.5</td><td class="r">23.125</td><td>A1733 Urology OR | 2 Rollout shelfs w/ sides &amp; back, spacer on hinge side</td><td>PL2 Formica 6209-43 Prestige Walnut</td><td>21-08 -- Release 02</td><td>A1733 UROLOGY</td></tr>
<tr><td>473</td><td>345.00</td><td>HD Base Assembly PLY</td><td class="r">1</td><td class="r">22</td><td class="r">6</td><td class="r">21</td><td>A1733 Urology OR</td><td>PL2 Formica 6209-43 Prestige Walnut</td><td>21-08 -- Release 02</td><td>A1733 UROLOGY</td></tr>
<tr><td>474</td><td>346.00</td><td>1 Door Base MOD</td><td class="r">1</td><td class="r">21</td><td class="r">28.5</td><td class="r">23.125</td><td>A1737 ENT OR | 2 Rollout shelfs w/ sides &amp; back, spacer on hinge side</td><td>PL2 Formica 6209-43 Prestige Walnut</td><td>21-08 -- Release 02</td><td>A1737 ENT OR</td></tr>
<tr><td>475</td><td>347.00</td><td>HD Base Assembly PLY</td><td class="r">1</td><td class="r">22</td><td class="r">6</td><td class="r">21</td><td>A1737 ENT OR</td><td>PL2 Formica 6209-43 Prestige Walnut</td><td>21-08 -- Release 02</td><td>A1737 ENT OR</td></tr>
<tr><td>476</td><td>348.00</td><td>1 Door Base MOD</td><td class="r">1</td><td class="r">21</td><td class="r">28.5</td><td class="r">23.125</td><td>A1743 Ortho-Neuro OR | 2 Rollout shelfs w/ sides &amp; back, spacer on hinge side</td><td>PL2 Formica 6209-43 Prestige Walnut</td><td>21-08 -- Release 02</td><td>A1743 ORTHO</td></tr>
<tr><td>477</td><td>349.00</td><td>HD Base Assembly PLY</td><td class="r">1</td><td class="r">22</td><td class="r">6</td><td class="r">21</td><td>A1743 Ortho-Neuro OR</td><td>PL2 Formica 6209-43 Prestige Walnut</td><td>21-08 -- Release 02</td><td>A1743 ORTHO</td></tr>
<tr><td>478</td><td>350.00</td><td>1 Door Base MOD</td><td class="r">1</td><td class="r">21</td><td class="r">28.5</td><td class="r">23.125</td><td>A1748 Ortho OR | 2 Rollout shelfs w/ sides &amp; back, spacer on hinge side</td><td>PL2 Formica 6209-43 Prestige Walnut</td><td>21-08 -- Release 02</td><td>A1748 ORTHO</td></tr>
</table>
<svg class="a" style="left:302px;top:655px" width="6" height="10"><path d="M0 0l6 5-6 5z" fill="#111"/></svg>

<!-- grid scrollbars -->
<div class="a" style="left:1897px;top:214px;width:16px;height:783px;background:#f0f0f0"></div>
<div class="a" style="left:1897px;top:319px;width:16px;height:17px;background:#cdcdcd"></div>
<svg class="a" style="left:1900px;top:219px" width="10" height="6"><path d="M1 5l4-4 4 4" fill="none" stroke="#555" stroke-width="1.6"/></svg>
<svg class="a" style="left:1900px;top:985px" width="10" height="6"><path d="M1 1l4 4 4-4" fill="none" stroke="#555" stroke-width="1.6"/></svg>
<div class="a" style="left:299px;top:997px;width:1614px;height:17px;background:#f0f0f0"></div>
<div class="a" style="left:315px;top:997px;width:1451px;height:17px;background:#c9c9c9"></div>
<svg class="a" style="left:303px;top:1000px" width="6" height="10"><path d="M5 1L1 5l4 4" fill="none" stroke="#444" stroke-width="1.6"/></svg>
<svg class="a" style="left:1884px;top:1000px" width="6" height="10"><path d="M1 1l4 4-4 4" fill="none" stroke="#444" stroke-width="1.6"/></svg>

<!-- context menu -->
<div class="a" style="left:464px;top:409px;width:290px;height:627px;background:#fff;border:1px solid #9d9d9d;border-bottom:none;box-sizing:border-box;box-shadow:1px -1px 4px rgba(0,0,0,.55),2px 1px 3px rgba(0,0,0,.45)"></div>
<div class="a" style="left:465px;top:410px;width:32px;height:626px;background:linear-gradient(to right,#fff,#eeeeee)"></div>
<div class="a" style="left:465px;top:478px;width:288px;height:32px;background:#a9d3e9;border:1px solid #2a8cc4;box-sizing:border-box"></div>
<div class="a" style="left:505px;top:542px;width:246px;height:1px;background:#c8c8c8"></div>
<div class="a" style="left:505px;top:908px;width:246px;height:1px;background:#c8c8c8"></div>
<div class="a" style="left:505px;top:944px;width:246px;height:1px;background:#c8c8c8"></div>

<svg class="a" style="left:472px;top:421px" width="19" height="24" viewBox="0 0 19 24"><path d="M1 1h17v19l-4 3H1z" fill="#fff" stroke="#111" stroke-width="1.5"/><path d="M5 5h9" stroke="#3a8fd4" stroke-width="1.6"/><rect x="6" y="8" width="6" height="5" fill="none" stroke="#3a8fd4" stroke-width="1.4"/><rect x="6" y="15" width="6" height="5" fill="none" stroke="#3a8fd4" stroke-width="1.4"/></svg>
<svg class="ms" style="top:449px;color:#000"><use href="#gear" width="24" height="24"/></svg>
<svg class="a" style="left:468px;top:481px" width="27" height="24" viewBox="0 0 24 22"><polygon points="0,12 11,21 24,15 24,9 11,16" fill="#8fa39c"/><polygon points="7,1 24,9 24,14 11,19 4,13" fill="#0a5fc9"/><polygon points="6,8 24,13 24,15 11,20 4,14" fill="#7fb0b3"/><polygon points="1,5 8,1 8,10 1,14" fill="#8fa9bd" stroke="#111" stroke-width="1.6"/></svg>
<svg class="ms" style="top:512px"><use href="#floppy" width="24" height="24"/></svg>
<svg class="ms" style="top:548px" viewBox="0 0 24 24"><path d="M2 6h15v16H2z" fill="#fff" stroke="#000" stroke-width="2.2"/><path d="M8 16l1-4L19 2l4 4-10 10z" fill="#000"/></svg>
<svg class="ms" style="top:578px" viewBox="0 0 24 24"><path d="M12 1v22M1 12h22" stroke="#000" stroke-width="2.2"/><path d="M12 0l4 5H8zM12 24l4-5H8zM0 12l5-4v8zM24 12l-5-4v8z" fill="#000"/></svg>
<svg class="ms" style="top:608px"><use href="#doc2" width="24" height="24"/></svg>
<svg class="ms" style="top:639px" viewBox="0 0 24 24"><rect x="1" y="1" width="22" height="21" fill="#f4f4f4" stroke="#111" stroke-width="1.6"/><path d="M1 14h22M1 17h22M1 20h22" stroke="#111"/><text x="4" y="11" font-size="9" font-weight="bold" font-family="Liberation Serif,serif" fill="#111">list</text></svg>
<svg class="ms" style="top:670px" viewBox="0 0 24 24"><path d="M12 12L20 5l4 5-8 7z" fill="#000"/><path d="M9 14l3-2 4 5-3 3z" fill="#e89a3c"/><path d="M1 21l4-3 1 3zM8 19l3 2H7z" fill="#111"/></svg>
<svg class="ms" style="top:698px" viewBox="0 0 24 24"><path d="M12 1v22M1 12h22" stroke="#000" stroke-width="3"/></svg>
<svg class="ms" style="top:728px"><use href="#doc2" width="24" height="24"/></svg>
<svg class="a" style="left:470px;top:760px;overflow:visible" width="24" height="24" viewBox="0 0 24 24"><text x="1" y="9" font-size="8.5" font-weight="bold" fill="#333" font-family="Liberation Sans,sans-serif">1,2,3</text><path d="M0 6h23" stroke="#333"/><text x="1" y="21" font-size="9" font-weight="bold" fill="#2a7fc4" font-family="Liberation Sans,sans-serif">4,5,6</text></svg>
<svg class="ms" style="top:788px" viewBox="0 0 24 24"><ellipse cx="14" cy="8" rx="10" ry="7" fill="#0a78dc"/><path d="M18 13l4 3-1-5z" fill="#0a78dc"/><ellipse cx="9" cy="15" rx="8" ry="5" fill="#000"/><path d="M5 18l-1 5 6-4z" fill="#000"/></svg>
<svg class="ms" style="top:818px"><use href="#hammer" width="24" height="24"/></svg>
<svg class="ms" style="top:848px"><use href="#hammer" width="24" height="24"/></svg>
<svg class="ms" style="top:878px" viewBox="0 0 24 24"><path d="M6 14L20 2" stroke="#f0dcae" stroke-width="5"/><path d="M3 15l4-4 3 3-4 4z" fill="#d33"/><path d="M3 21c5-5 8-1 11-4 3 2 5 2 8 2" fill="none" stroke="#888" stroke-width="1.4"/></svg>
<svg class="a" style="left:470px;top:915px" width="22" height="20" viewBox="0 0 22 20"><path d="M11 1l10 4v10l-10 4-10-4V5z" fill="#f4f4f4" stroke="#aaa" stroke-width="1.8"/><path d="M11 3l7 3-7 3-7-3z" fill="#8d8d8d"/><path d="M4 7l6 3v6l-6-3zM18 7l-6 3v6l6-3z" fill="#c2c2c2"/></svg>
<svg class="a" style="left:470px;top:955px;color:#000" width="15" height="15"><use href="#gear" width="15" height="15"/></svg>
<svg class="a" style="left:470px;top:985px" width="14" height="14"><use href="#floppy" width="14" height="14"/></svg>
<svg class="a" style="left:469px;top:1014px" width="16" height="16" viewBox="0 0 16 16"><rect x="4" y="1" width="8" height="5" fill="#fff" stroke="#111" stroke-width="1.4"/><rect x="1" y="5" width="14" height="7" rx="1.5" fill="#333"/><rect x="4" y="10" width="8" height="5" fill="#fff" stroke="#111" stroke-width="1.4"/></svg>

<div class="t mn" style="left:508px;top:424px">Show Product Prompts...</div>
<div class="t mn" style="left:508px;top:454px;letter-spacing:-.05px">Show Part Properties...</div>
<div class="t mn" style="left:509px;top:486px">Show <b style="font-weight:bold">in room</b></div>
<div class="t mn" style="left:508px;top:516px">Save Product to Library</div>
<div class="t mn" style="left:508px;top:552px">Edit Product List</div>
<svg class="a" style="left:738px;top:556px" width="5" height="8"><path d="M0 0l5 4-5 4z" fill="#111"/></svg>
<div class="t mn" style="left:508px;top:582px;letter-spacing:.22px">Move Selection to Another Room</div>
<div class="t mn" style="left:508px;top:612px;letter-spacing:.22px">Copy Selection to Another Room</div>
<div class="t mn" style="left:508px;top:642px">Parts List Review</div>
<div class="t mn" style="left:508px;top:672px">Delete Selected Product(s)</div>
<div class="t mn" style="left:508px;top:702px">Add New Empty Product</div>
<div class="t mn" style="left:508px;top:732px">Copy Selected Product(s)</div>
<div class="t mn" style="left:508px;top:762px">ReNumber</div>
<div class="t mn" style="left:508px;top:792px;letter-spacing:.3px">Add Comment</div>
<div class="t mn" style="left:508px;top:822px">Rebuild Selected Products From Library</div>
<div class="t mn" style="left:508px;top:852px">Rebuild Subassemblies From Library</div>
<div class="t mn" style="left:508px;top:882px;letter-spacing:.12px">Clear Workorder Column</div>
<div class="t mn" style="left:508px;top:918px;color:#8a8a8a;letter-spacing:.08px">Make Product Group From Selection</div>
<div class="t mn" style="left:508px;top:954px">Grid View Settings</div>
<div class="t mn" style="left:508px;top:984px">Export Grid</div>
<div class="t mn" style="left:508px;top:1014px">Print Grid</div>

<!-- green arrows -->
<svg class="a" style="left:0;top:0;filter:drop-shadow(2px 3px 2px rgba(0,0,0,.5));pointer-events:none" width="1917" height="1036">
<polygon points="225,212 267,175 264,193 336,165 341,172 265,200 286,213" fill="#00f000"/>
<polygon points="638,493 675,452 677,471 815,397 821,404 679,478 693,487" fill="#00f000"/>
</svg>
</div></body></html>
